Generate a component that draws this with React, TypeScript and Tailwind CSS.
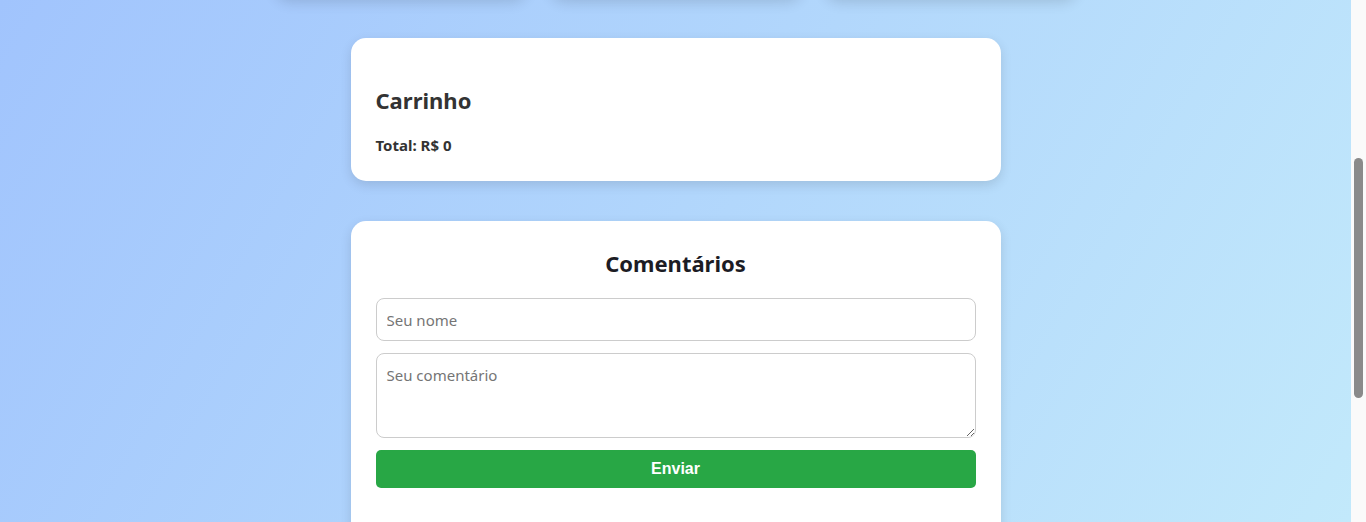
import React from 'react'

const App: React.FC = () => {
  return (
    <div className="flex h-[522px] w-full overflow-hidden font-['Noto_Sans',sans-serif] text-[#333]">
      {/* Page content (scrolled down past the product grid) */}
      <div className="flex min-w-0 flex-1 flex-col items-center overflow-hidden bg-[linear-gradient(120deg,#a1c4fd_0%,#c2e9fb_100%)]">
        {/* Product cards, bottoms just above the viewport */}
        <div className="-mt-[22px] flex shrink-0 gap-[23px]">
          <div className="h-[20px] w-[252px] rounded-b-[15px] bg-white shadow-[0_4px_14px_rgba(0,0,0,0.14)]" />
          <div className="h-[20px] w-[252px] rounded-b-[15px] bg-white shadow-[0_4px_14px_rgba(0,0,0,0.14)]" />
          <div className="h-[20px] w-[252px] rounded-b-[15px] bg-white shadow-[0_4px_14px_rgba(0,0,0,0.14)]" />
        </div>

        {/* Cart */}
        <div className="mt-[40px] w-[650px] shrink-0 rounded-[15px] bg-white px-[25px] pt-[45px] pb-[25px] shadow-[0_4px_12px_rgba(0,0,0,0.12)]">
          <h2 className="text-[22px] leading-[34px] font-bold text-[#333]">Carrinho</h2>
          <p className="mt-[17px] text-[15px] leading-[22px] font-bold text-[#333]">Total: R$ 0</p>
        </div>

        {/* Comments */}
        <div className="mt-[40px] w-[650px] shrink-0 rounded-[15px] bg-white px-[25px] pt-[25px] pb-[80px] shadow-[0_4px_12px_rgba(0,0,0,0.12)]">
          <h2 className="mb-[18px] text-center text-[22px] leading-[34px] font-bold text-[#1c1c24]">Comentários</h2>
          <div className="flex flex-col gap-[12px]">
            <input
              type="text"
              placeholder="Seu nome"
              className="h-[43px] w-full rounded-[8px] border border-[#ccc] px-[10px] text-[15px] outline-none placeholder:text-[#757575]"
            />
            <textarea
              placeholder="Seu comentário"
              className="h-[85px] w-full rounded-[8px] border border-[#ccc] px-[10px] py-[10px] text-[15px] outline-none placeholder:text-[#757575]"
            />
            <button className="h-[38px] w-full rounded-[5px] bg-[#28a745] font-['Liberation_Sans',sans-serif] text-[16px] font-bold text-white">
              Enviar
            </button>
          </div>
        </div>
      </div>

      {/* Scrollbar */}
      <div className="flex w-[15px] shrink-0 flex-col bg-[#fafafa] pt-[158px] pl-[3px]">
        <div className="h-[240px] w-[9px] rounded-full bg-[#8a8a8a]" />
      </div>
    </div>
  )
}

export default App
